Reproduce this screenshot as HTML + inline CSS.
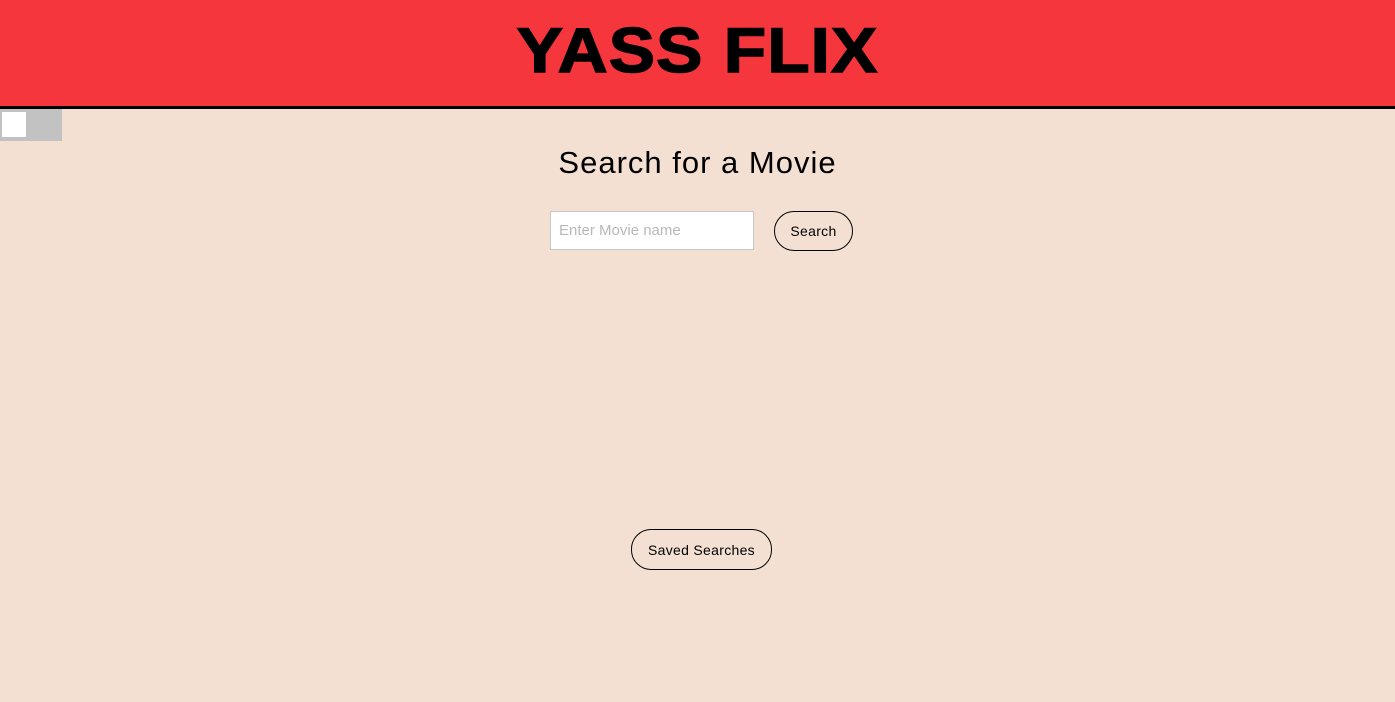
<!DOCTYPE html>
<html><head><style>
body{margin:0;background:#f3e0d3;font-family:"Liberation Sans",sans-serif;width:1395px;height:702px;overflow:hidden;position:relative}
header{height:106px;background:#f6363d;border-bottom:3px solid #000;position:relative}
header h1{position:absolute;left:0;right:0;top:11px;margin:0;text-align:center;font-size:63px;font-weight:900;line-height:80px;letter-spacing:1px;color:#000;transform:scaleX(1.1);-webkit-text-stroke:1.5px #000}
.tog{position:absolute;left:0;top:109px;width:62px;height:32px;background:#c2c2c2}
.tog i{position:absolute;left:2px;top:3px;width:24px;height:25px;background:#fff}
h2{position:absolute;left:0;right:0;top:145px;margin:0;text-align:center;font-weight:400;font-size:31px;line-height:36px;letter-spacing:1px}
.inp{position:absolute;left:550px;top:211px;height:37px;background:#fff;border:1px solid #c8c8c8;color:#b8b8b8;font-size:15px;line-height:38px;padding-left:8px;width:194px}
.btn{position:absolute;border:1px solid #000;border-radius:20px;font-size:14px;text-align:center;box-sizing:border-box;letter-spacing:.3px}
</style></head><body>
<header><h1>YASS FLIX</h1></header>
<div class="tog"><i></i></div>
<h2>Search for a Movie</h2>
<div class="inp">Enter Movie name</div>
<div class="btn" style="left:774px;top:211px;width:79px;height:40px;line-height:39px">Search</div>
<div class="btn" style="left:631px;top:529px;width:141px;height:41px;line-height:40px">Saved Searches</div>
</body></html>
